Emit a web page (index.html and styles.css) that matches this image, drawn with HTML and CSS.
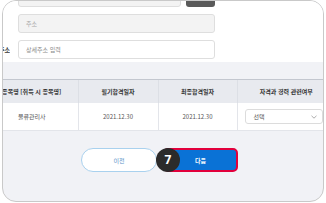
FILE: index.html
```html
<!DOCTYPE html>
<html lang="ko">
<head>
<meta charset="utf-8">
<link rel="stylesheet" href="styles.css">
</head>
<body>
<div class="frame">
  <div class="canvas">
    <section class="form">
      <div class="row">
        <span class="label"></span>
        <div class="input gray short"></div>
        <span class="btn-dark"></span>
      </div>
      <div class="row">
        <span class="label"></span>
        <div class="input gray">주소</div>
      </div>
      <div class="row">
        <span class="label">상세주소</span>
        <div class="input">상세주소 입력</div>
      </div>
    </section>
    <table class="grid">
      <colgroup>
        <col class="c1"><col class="c2"><col class="c3"><col class="c4">
      </colgroup>
      <thead>
        <tr><th>종목명 [취득 시 종목명]</th><th>필기합격일자</th><th>최종합격일자</th><th>자격과 경력 관련여부</th></tr>
      </thead>
      <tbody>
        <tr>
          <td>물류관리사</td><td>2021.12.30</td><td>2021.12.30</td>
          <td class="sel-cell"><div class="select"><span>선택</span><svg class="chev" width="6" height="4" viewBox="0 0 6 4"><path d="M0.5 0.8 L3 3.2 L5.5 0.8" fill="none" stroke="#888" stroke-width="0.7"/></svg></div></td>
        </tr>
      </tbody>
    </table>
    <div class="actions">
      <button class="btn prev">이전</button>
      <div class="next-wrap">
        <button class="btn next">다음</button>
        <span class="badge">7</span>
      </div>
    </div>
  </div>
</div>
</body>
</html>
```

FILE: styles.css
```css
html, body {
  margin: 0;
  padding: 0;
  background: #ffffff;
  width: 326px;
  height: 203px;
  overflow: hidden;
}
body {
  font-family: "Noto Sans CJK KR", "Noto Sans", sans-serif;
  font-size: 6px;
  color: #444;
}
.frame {
  margin: 0 2px;
  width: 320px;
  height: 200px;
  border: 1px solid #c9c9c9;
  border-radius: 14px;
  overflow: hidden;
  background: #f1f2f6;
}
.canvas {
  margin-left: -20px;
  width: 360px;
}
.form {
  background: #ffffff;
  margin-top: -13px;
  padding-bottom: 3px;
  display: flex;
  flex-direction: column;
  gap: 7px;
}
.row {
  display: flex;
  align-items: center;
  height: 19px;
}
.label {
  width: 27px;
  text-align: right;
  font-weight: 700;
  color: #333;
  white-space: nowrap;
  overflow: hidden;
  direction: rtl;
  margin-right: 8px;
}
.input {
  box-sizing: border-box;
  width: 197px;
  height: 19px;
  border: 1px solid #dedede;
  border-radius: 3px;
  background: #fff;
  color: #8a8a8a;
  padding-left: 7px;
  display: flex;
  align-items: center;
}
.input.gray {
  background: #f3f3f3;
  color: #a8a8a8;
}
.input.short {
  width: 163px;
}
.btn-dark {
  width: 29px;
  height: 19px;
  margin-left: 5px;
  border-radius: 3px;
  background: #5a5a5a;
}
.grid {
  margin-top: 17px;
  margin-left: 3px;
  border-collapse: collapse;
  table-layout: fixed;
  width: 349px;
}
.c1 { width: 92px; }
.c2 { width: 80px; }
.c3 { width: 79px; }
.c4 { width: 98px; }
.grid th {
  height: 23px;
  background: #e8eaef;
  border-top: 1px solid #c3c7cf;
  border-left: 1px solid #dcdfe5;
  font-weight: 700;
  color: #333;
  padding: 0;
  white-space: nowrap;
}
.grid td {
  height: 27px;
  background: #ffffff;
  border-left: 1px solid #e3e5ea;
  border-bottom: 1px solid #e3e5ea;
  text-align: center;
  color: #555;
  padding: 0;
  white-space: nowrap;
}
.grid th:first-child, .grid td:first-child { border-left: none; }
.grid td.sel-cell {
  text-align: left;
  padding-left: 7px;
}
.select {
  box-sizing: border-box;
  width: 78px;
  height: 15px;
  border: 1px solid #dcdcdc;
  border-radius: 3px;
  background: #fff;
  display: flex;
  align-items: center;
  justify-content: space-between;
  padding: 0 5px 0 8px;
  color: #555;
}
.actions {
  display: flex;
  gap: 6px;
  margin-top: 17px;
  padding-left: 98px;
}
.btn {
  box-sizing: border-box;
  height: 24px;
  font-family: inherit;
  font-size: 6px;
  padding: 0;
  cursor: pointer;
}
.prev {
  width: 76px;
  border: 1px solid #a9d1ee;
  border-radius: 12px;
  background: #fff;
  color: #5b93c8;
}
.next-wrap {
  position: relative;
}
.next {
  width: 75px;
  border: 2px solid #e2003c;
  border-radius: 5px;
  background: #0a72d6;
  color: #ffffff;
  font-weight: 700;
}
.badge {
  position: absolute;
  left: -7px;
  top: 0;
  width: 24px;
  height: 24px;
  border-radius: 50%;
  background: #2b2b2b;
  color: #fff;
  font-family: "Noto Sans", "Liberation Sans", sans-serif;
  font-weight: 700;
  font-size: 12px;
  display: flex;
  align-items: center;
  justify-content: center;
  line-height: 1;
}
```
